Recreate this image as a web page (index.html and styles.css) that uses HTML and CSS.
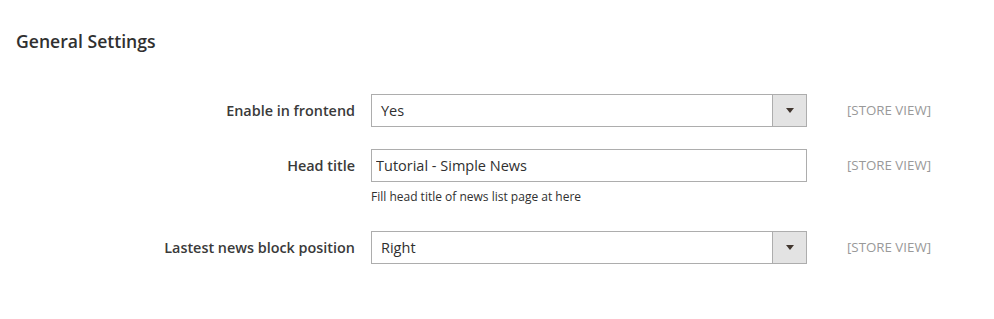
FILE: index.html
```html
<!DOCTYPE html>
<html lang="en">
<head>
  <meta charset="UTF-8">
  <title>General Settings</title>
  <link rel="stylesheet" href="styles.css">
</head>
<body>
  <div class="config">
    <h2 class="config-title">General Settings</h2>

    <div class="field-row">
      <label class="field-label">Enable in frontend</label>
      <div class="field-control">
        <div class="select">
          <span class="select-value">Yes</span>
          <span class="select-arrow"><span class="caret"></span></span>
        </div>
      </div>
      <div class="field-scope">[STORE VIEW]</div>
    </div>

    <div class="field-row">
      <label class="field-label">Head title</label>
      <div class="field-control">
        <input class="text-input" type="text" value="Tutorial - Simple News">
        <p class="field-note">Fill head title of news list page at here</p>
      </div>
      <div class="field-scope">[STORE VIEW]</div>
    </div>

    <div class="field-row">
      <label class="field-label">Lastest news block position</label>
      <div class="field-control">
        <div class="select">
          <span class="select-value">Right</span>
          <span class="select-arrow"><span class="caret"></span></span>
        </div>
      </div>
      <div class="field-scope">[STORE VIEW]</div>
    </div>
  </div>
</body>
</html>
```

FILE: styles.css
```css
body {
  margin: 0;
  background: #fff;
  font-family: "Open Sans", "Liberation Sans", Arial, sans-serif;
  color: #303030;
}
.config {
  padding: 29px 0 0 16px;
}
.config-title {
  margin: 0 0 41px;
  font-size: 17.6px;
  font-weight: 600;
  line-height: 24px;
  color: #303030;
}
.field-row {
  display: flex;
  align-items: flex-start;
  margin-bottom: 22px;
}
.field-label {
  width: 339px;
  margin-right: 16px;
  text-align: right;
  font-size: 14.4px;
  font-weight: 600;
  line-height: 33px;
  color: #3a3a3a;
}
.field-control {
  width: 436px;
}
.select {
  display: flex;
  height: 33px;
  box-sizing: border-box;
  border: 1px solid #adadad;
  background: #fff;
}
.select-value {
  flex: 1;
  padding-left: 9px;
  font-size: 14.5px;
  line-height: 31px;
}
.select-arrow {
  width: 33px;
  border-left: 1px solid #adadad;
  background: #e3e3e3;
  display: flex;
  align-items: center;
  justify-content: center;
}
.caret {
  width: 0;
  height: 0;
  border-left: 4px solid transparent;
  border-right: 4px solid transparent;
  border-top: 5px solid #41362f;
}
.text-input {
  display: block;
  width: 100%;
  height: 33px;
  box-sizing: border-box;
  margin: 0;
  padding: 0 0 0 4px;
  border: 1px solid #adadad;
  border-radius: 0;
  font-family: inherit;
  font-size: 14.5px;
  color: #303030;
}
.field-note {
  margin: 6px 0 4px;
  font-size: 12px;
  line-height: 17px;
}
.field-scope {
  margin-left: 40px;
  font-size: 13.3px;
  line-height: 33px;
  color: #999;
}
```
